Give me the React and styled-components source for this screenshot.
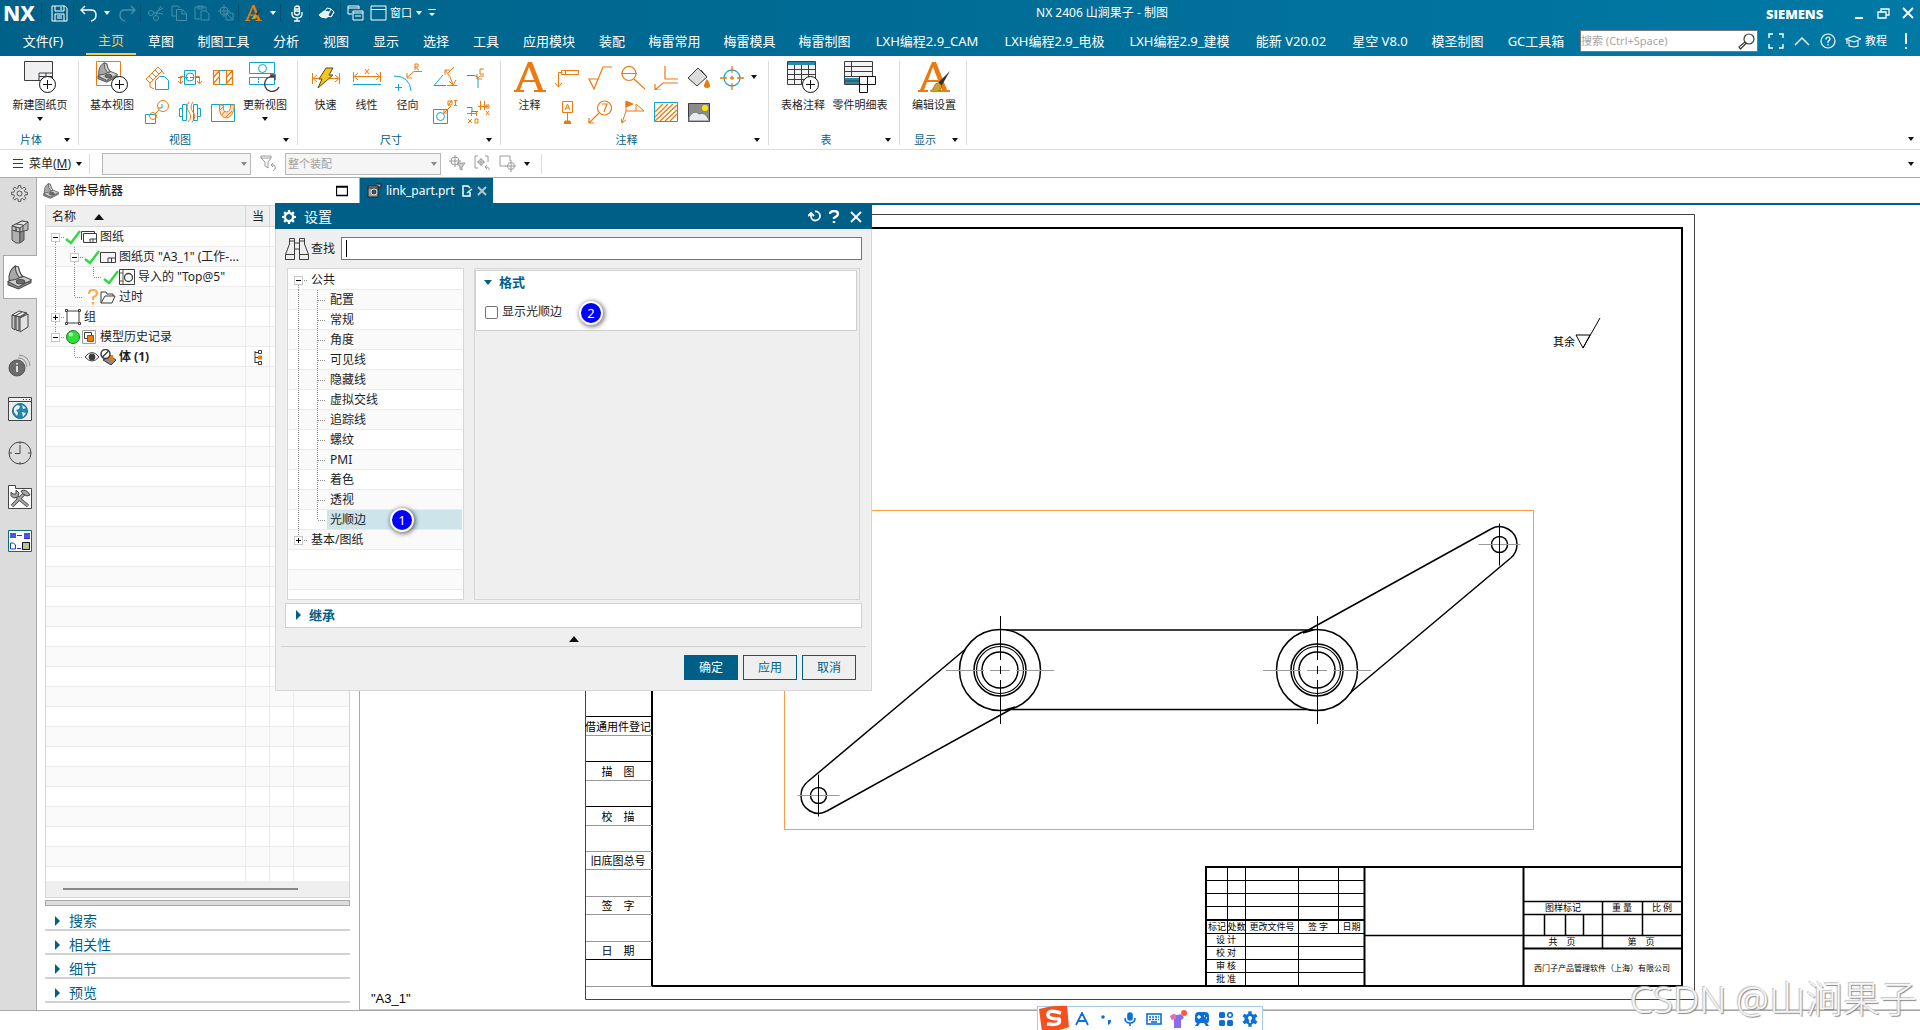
import React from "react";
import styled, { createGlobalStyle, css } from "styled-components";

const TEAL = "#005f87";
const OR = "#eb7a0f";
const CY = "#12a5cc";
const DK = "#3c3c3c";
const UI = `"Noto Sans", "Noto Sans CJK SC", sans-serif`;

const Global = createGlobalStyle`
  *, *::before, *::after { box-sizing: border-box; }
  body { margin: 0; background: #fff; color: #1e1e1e; font: 12px/16px ${UI}; overflow: hidden; }
  button, input, select { font: inherit; color: inherit; border: 0; padding: 0; margin: 0; background: none; border-radius: 0; }
  svg { display: block; flex: none; }
  ul { list-style: none; margin: 0; padding: 0; }
`;

/* ---------- shell ---------- */
const Shell = styled.div`display: flex; flex-direction: column; height: 100vh;`;
const Header = styled.header`
  height: 56px; flex: none; color: #fff;
  background: linear-gradient(90deg, #006188, #0079a5);
`;
const TitleBar = styled.div`display: flex; align-items: center; height: 26px;`;
const Brand = styled.div`width: 41px; padding-left: 3px; font-size: 21px; line-height: 26px; font-weight: 800;`;
const Sep = styled.span`width: 1px; height: 18px; margin-right: 3px; background: #004f70;`;
const QButton = styled.button`
  display: flex; align-items: center; justify-content: center;
  width: ${(p) => p.$w || 23}px; height: 26px; opacity: ${(p) => (p.$off ? 0.28 : 1)};
`;
const WindowText = styled.span`font-size: 11px;`;
const Title = styled.h1`flex: 1; margin: 0; text-align: center; font-size: 12px; line-height: 26px; font-weight: 400;`;
const Siemens = styled.span`width: 81px; font-family: "Open Sans", sans-serif; font-size: 13px; font-weight: 800; padding-top: 2px;`;
const MenuRow = styled.nav`display: flex; align-items: center; height: 30px;`;
const MenuTab = styled.button`
  height: 28px; font-size: 13px; line-height: 28px; white-space: nowrap; text-align: center;
  width: ${(p) => p.$w}px;
  ${(p) => p.$on && css`color: #ffc84a; border-bottom: 2px solid #ffc84a; line-height: 26px;`}
`;
const Find = styled.div`
  display: flex; align-items: center; flex: none; width: 178px; height: 22px; margin-left: 3px; margin-right: auto;
  padding-right: 2px; background: #fff; border: 1px solid #7a7a7a;
  input { flex: 1; min-width: 0; font-size: 11px; outline: 0; color: #222; }
  input::placeholder { color: #a6a6a6; opacity: 1; }
`;
const MenuEnd = styled.div`display: flex; align-items: center;`;
const HeadButton = styled.button`display: flex; align-items: center; justify-content: center; gap: 4px; width: ${(p) => p.$w || 26}px; height: 26px; font-size: 11px;`;

/* ---------- ribbon ---------- */
const Ribbon = styled.div`display: flex; flex: none; height: 94px; padding-top: 5px; border-bottom: 1px solid #dcdcdc;`;
const Group = styled.section`display: flex; flex-direction: column; flex: none; width: ${(p) => p.$w}px; height: 84px; border-right: 1px solid #dcdcdc;`;
const GroupBody = styled.div`display: flex; flex: none; height: 70px; padding-left: ${(p) => p.$pad}px;`;
const GroupFoot = styled.div`
  display: flex; align-items: center; flex: none; height: 14px; margin-top: 2px; padding-right: 6px; color: ${TEAL}; font-size: 11px; line-height: 14px;
  span { flex: 1; text-align: center; }
  button { width: 10px; height: 14px; display: flex; align-items: center; justify-content: center; }
`;
const Big = styled.button`
  display: flex; flex-direction: column; align-items: center; width: ${(p) => p.$w}px; height: 66px;
  font-size: 11px; line-height: 14px; white-space: nowrap; color: #1e1e1e;
  svg:first-child { margin-bottom: 5px; }
  svg:last-child:not(:first-child) { margin-top: 5px; }
`;
const SmallGrid = styled.div`display: grid; grid-template-columns: repeat(${(p) => p.$n}, 33px); grid-auto-rows: 34px;`;
const Small = styled.button`display: flex; align-items: center; justify-content: center;`;
const RibbonEnd = styled.button`display: flex; align-self: flex-end; margin: 0 6px 8px auto;`;

/* ---------- selection bar ---------- */
const SelBar = styled.div`display: flex; align-items: center; flex: none; height: 28px; border-bottom: 1px solid #a8a8a8; padding: 0 6px 0 12px;`;
const MenuButton = styled.button`display: flex; align-items: center; gap: 5px; width: 77px; font-size: 12px;`;
const BarSep = styled.span`width: 1px; height: 20px; background: #dcdcdc; margin-right: ${(p) => p.$r || 0}px; margin-left: ${(p) => p.$l || 0}px;`;
const Pick = styled.div`
  display: grid; align-items: center; width: ${(p) => p.$w}px; height: 22px;
  > * { grid-area: 1 / 1; }
  select { appearance: none; width: 100%; height: 22px; padding-left: 2px; background: #f5f5f5; border: 1px solid #b8b8b8; color: #a0a0a0; opacity: 1; font-size: 11px; }
  svg { justify-self: end; margin-right: 4px; }
`;
const BarIcon = styled.button`display: flex; align-items: center; justify-content: center; width: ${(p) => p.$w || 25}px; height: ${(p) => p.$h || 24}px;`;
const Push = styled.span`flex: 1;`;

/* ---------- main area ---------- */
const Main = styled.main`position: relative; display: flex; flex: 1; min-height: 0;`;
const Strip = styled.nav`width: 37px; flex: none; background: #dcdcdc; border-right: 1px solid #a8a8a8;`;
const StripButton = styled.button`
  display: flex; align-items: center; justify-content: center; width: 36px; height: ${(p) => p.$h || 44}px; padding-left: 3px;
  ${(p) => p.$on && css`width: 34px; margin-left: 3px; padding-left: 0; padding-right: 2px; background: #fff; border: 1px solid #a8a8a8; border-right: 0;`}
`;
const Side = styled.aside`display: flex; flex-direction: column; width: 323px; flex: none; border-right: 1px solid #a8a8a8; padding: 0 9px 7px 8px;`;
const SideTitle = styled.div`
  display: flex; align-items: center; height: 27px; gap: 4px; padding: 0 2px 2px 0; margin-left: -2px;
  h2 { flex: 1; margin: 0; font-size: 12px; font-weight: 500; }
`;
const Tree = styled.div`display: flex; flex-direction: column; flex: 1; min-height: 0; border: 1px solid #d6d6d6;`;
const TreeClip = styled.div`flex: 1; min-height: 0; overflow: hidden;`;
const TreeTable = styled.table`
  width: 100%; border-collapse: separate; border-spacing: 0; table-layout: fixed;
  col:nth-child(1) { width: 200px; }
  col:nth-child(2), col:nth-child(3) { width: 24px; }
  th { height: 21px; padding: 2px 0 0 6px; background: #efefef; border-bottom: 1px solid #d6d6d6; border-right: 1px solid #d6d6d6; text-align: left; font-weight: 400; line-height: 16px; }
  td { height: 20px; padding: 0; border-bottom: 1px solid #ebebeb; border-right: 1px solid #ebebeb; line-height: 16px; }
  tbody tr:nth-child(even) td { background: #fafafa; }
  th:last-child, td:last-child { border-right: 0; }
`;
const HeadCell = styled.div`display: flex; align-items: center; gap: 18px;`;
const NodeCell = styled.div`
  display: flex; align-items: center; height: 19px; white-space: nowrap; overflow: hidden; font-weight: ${(p) => (p.$b ? 700 : 400)};
  span { padding-left: 3px; }
`;
const ScrollTrack = styled.div`height: 16px; background: #efefef; padding: 7px 0 0 17px;`;
const ScrollThumb = styled.div`width: 82%; height: 2px; background: #888;`;
const Splitter = styled.div`height: 6px; margin: 2px 0 1px; background: #dcdcdc; border: 1px solid #a8a8a8;`;
const Fold = styled.button`
  display: flex; align-items: center; gap: 8px; width: 100%; height: 24px; padding: 5px 0 0 10px;
  border-bottom: 2px solid #d2d2d2; color: ${TEAL}; font-size: 14px; line-height: 17px; flex: none;
`;
const Work = styled.section`display: flex; flex-direction: column; flex: 1; min-width: 0; border-bottom: 1px solid #c8c8c8;`;
const DocTabs = styled.div`display: flex; height: 27px; flex: none; border-bottom: 2px solid ${TEAL};`;
const DocTab = styled.button`display: flex; align-items: center; width: 133px; height: 25px; padding-left: 7px; gap: 4px; background: ${TEAL}; color: #fff; font-size: 12px;
  span { flex: none; width: 72px; text-align: left; }
`;
const Canvas = styled.svg`flex: 1; min-height: 0; width: 100%;`;

/* ---------- dialog ---------- */
const Dialog = styled.div`position: absolute; left: 275px; top: 25px; width: 597px; background: #efefef; border: 1px solid #d6d6d6; border-top: 0;`;
const DialogHead = styled.div`
  display: flex; align-items: center; height: 26px; margin: 0 -1px; padding: 1px 4px 0 7px; background: ${TEAL}; color: #fff; gap: 8px;
  h2 { flex: 1; margin: 0; font-size: 14px; line-height: 24px; font-weight: 400; }
`;
const HeadTools = styled.div`display: flex; button { width: 20px; height: 24px; display: flex; align-items: center; justify-content: center; } button:last-child { width: 24px; }`;
const SearchRow = styled.label`display: flex; align-items: center; padding: 8px 9px 8px 9px; gap: 2px; line-height: 16px;`;
const SearchBox = styled.span`
  display: flex; align-items: center; flex: 1; height: 23px; margin-left: 4px; padding-left: 4px; border: 1px solid #757575; background: #fff;
  i { width: 1px; height: 17px; background: #000; }
  input { flex: 1; outline: 0; }
`;
const Panes = styled.div`display: flex; gap: 10px; height: 332px; padding: 0 11px;`;
const Cats = styled.ul`width: 177px; flex: none; padding: 1px; overflow: hidden; background: #fff; border: 1px solid #d6d6d6;`;
const Cat = styled.li`
  display: flex; height: 20px; border-bottom: 1px solid #ebebeb; background: ${(p) => (p.$alt ? "#fafafa" : "#fff")};
  svg { height: 20px; }
  span { flex: 1; padding-left: 3px; line-height: 19px; background: ${(p) => (p.$on ? "#cce4ea" : "none")}; }
`;
const Detail = styled.div`flex: 1; border: 1px solid #d6d6d6; padding: 1px 2px 0 0;`;
const Card = styled.fieldset`margin: 0; height: 61px; padding: 2px 8px; min-width: 0; background: #fff; border: 1px solid #d0d0d0;`;
const CardTitle = styled.button`display: flex; align-items: center; gap: 7px; height: 18px; color: ${TEAL}; font-size: 13px; font-weight: 700;`;
const Tick = styled.label`
  display: flex; align-items: center; gap: 4px; margin-top: 13px; padding-left: 1px;
  input { appearance: none; width: 13px; height: 13px; border: 1px solid #767676; border-radius: 2px; background: #fff; }
`;
const Inherit = styled.button`
  display: flex; align-items: center; gap: 7px; width: 577px; height: 25px; margin: 3px 9px 0; padding: 0 0 1px 10px;
  background: #fff; border: 1px solid #d0d0d0; color: ${TEAL}; font-size: 13px; font-weight: 700;
`;
const Collapse = styled.button`display: flex; justify-content: center; align-items: center; width: 585px; height: 19px; margin: 0 5px; padding-top: 3px; border-bottom: 1px solid #d0d0d0;`;
const Actions = styled.div`display: flex; justify-content: flex-end; gap: 5px; padding: 8px 15px 10px;`;
const Action = styled.button`
  width: 54px; height: 25px; border: 1px solid ${TEAL}; line-height: 20px;
  background: ${(p) => (p.$main ? TEAL : "transparent")}; color: ${(p) => (p.$main ? "#fff" : TEAL)};
`;
const Badge = styled.span`
  position: absolute; left: ${(p) => p.$x}px; top: ${(p) => p.$y}px; width: 24px; height: 24px; border-radius: 50%;
  background: #0000ff; border: 2px solid #fff; box-shadow: 1px 1px 4px 1px rgba(0,0,0,.5); color: #fff; text-align: center; font-size: 13px; line-height: 20px;
`;

/* ---------- bottom ---------- */
const Status = styled.footer`position: relative; flex: none; height: 20px; border-top: 1px solid #a8a8a8; background: #fff;`;
const Ime = styled.div`
  position: absolute; left: 54%; bottom: 0; display: flex; align-items: center; width: 226px; height: 24px;
  background: #fff; border: 1px solid #a9c9e8; border-bottom: 0; color: #0a6fd8;
  button { flex: none; width: 24px; height: 22px; display: flex; align-items: center; justify-content: center; }
  button:first-child { width: 32px; }
`;
const Mark = styled.div`
  position: absolute; right: 3px; bottom: 7px; font: 300 37px/48px ${UI}; color: rgba(255,255,255,.9);
  text-shadow: 1px 1px 1px #8a8a8a, -1px -1px 1px #c0c0c0; white-space: nowrap;
`;

/* ---------- drawing helpers ---------- */
const Ico = ({ w = 24, h = w, c = "currentColor", s = 1, children, vb }) => (
  <svg width={w} height={h} viewBox={vb || `0 0 ${w} ${h}`} fill="none" stroke={c} strokeWidth={s} aria-hidden="true">{children}</svg>
);
const Caret = ({ c = "#111" }) => <Ico w={6} h={4} c="none"><path d="M0 0h6L3 4z" fill={c} /></Ico>;
const RightTri = () => <Ico w={6} h={10} c="none"><path d="M0 0l5 5-5 5z" fill={TEAL} /></Ico>;
const UpTri = () => <Ico w={10} h={6} c="none"><path d="M0 6h10L5 0z" fill="#111" /></Ico>;

const cog = (c, inner, outer, n = 8) => {
  const step = (Math.PI * 2) / n;
  const at = (r, a) => `${(c + r * Math.cos(a)).toFixed(2)} ${(c + r * Math.sin(a)).toFixed(2)}`;
  let d = "";
  for (let i = 0; i < n; i++) {
    const a = i * step;
    d += `${i ? "L" : "M"}${at(inner, a - step * 0.3)}L${at(outer, a - step * 0.2)}L${at(outer, a + step * 0.2)}L${at(inner, a + step * 0.3)}`;
  }
  return d + "z";
};

const Branch = ({ k }) => {
  const up = /[uv]/.test(k), down = /[dv]/.test(k), box = /[-+]/.test(k);
  return (
    <Ico w={19} h={20} c="#8c8c8c">
      <g strokeDasharray="1 1">
        {up && <path d={`M9.5 0v${box ? 5 : 10}`} />}
        {down && <path d={`M9.5 ${box ? 15 : 10}v${box ? 5 : 10}`} />}
        {k.includes("h") && <path d={box ? "M15 10.5h3" : "M10 10.5h8"} />}
      </g>
      {box && <rect x="5.5" y="6.5" width="8" height="8" fill="#fff" stroke="#c8c8c8" />}
      {box && <path d="M7 10.5h5" stroke="#000" />}
      {k.includes("+") && <path d="M9.5 8v5" stroke="#000" />}
    </Ico>
  );
};

const Part = ({ w = 24, x = 0, y = 0 }) => (
  <svg x={x} y={y} width={w} height={w} viewBox="0 0 24 24" fill="#bdbdbd" stroke="#4a4a4a" strokeWidth="1">
    <path d="M1 16v3l10 4 12-6v-3z" fill="#8e8e8e" />
    <path d="M1 16l6-4 9-1 7 3q0 2-5 3l-7 4z" fill="#cfcfcf" />
    <path d="M2 15Q1 5 8 1l3 1q1 6 4 9l-7 3z" fill="#a8a8a8" />
    <path d="M8 1l3 1q1 6 4 9l-3 1Q8 8 8 1z" fill="#d8d8d8" />
    <ellipse cx="13" cy="16" rx="4" ry="2" fill="#6d6d6d" />
  </svg>
);
const Brush = ({ x = 0, y = 0, s = 1 }) => (
  <g transform={`translate(${x} ${y}) scale(${s})`} stroke="none">
    <path d="M20 0L9 11l3 3z" fill="#333" />
    <path d="M9 11c-5 1-3 6-8 8 6 2 11 0 11-5z" fill="#c9a227" stroke="#5b4a12" strokeWidth=".5" />
  </g>
);
const BigA = ({ w = 32, children }) => (
  <Ico w={w} h={32} vb="0 0 32 32" c="none">
    <path fill={OR} d="M0 29h2L14 1h4l11 28h3v2H20v-2h4l-3-8H9l-3 8h4v2H0zM10 19h10L15 6z" fillRule="evenodd" />
    {children}
  </Ico>
);
const PlusDisc = () => (
  <g stroke="#111"><circle cx="23.5" cy="23.5" r="8" fill="#fff" /><path d="M19 23.5h9M23.5 19v9" /></g>
);

const I = {
  save: <Ico w={17}><path d="M1 1h13l2 2v13H1zM4 1v5h9V1M10 2v3M4 16V9h9v7M6 11h5M6 13h5" /></Ico>,
  undo: <Ico w={17} s={1.4}><path d="M5 1L1 5l4 4M1 5h10q5 0 5 5t-5 6" /></Ico>,
  redo: <Ico w={17} s={1.4}><path d="M12 1l4 4-4 4M16 5H6q-5 0-5 5t5 6" /></Ico>,
  cut: <Ico w={16}><circle cx="3" cy="8" r="2.5" /><circle cx="8" cy="13" r="2.5" /><path d="M5 9l10-6M7 11L13 1M8 8l7 1" /></Ico>,
  copy: <Ico w={16}><path d="M5 11H1V1h6l2 2M5.500 4.500h6l4 4v7h-10zM11 5v4h4" /></Ico>,
  paste: <Ico w={16}><path d="M6 14H1V2h11v4M4 1h5v3H4zM7 6h5l3 3v6H7z" /></Ico>,
  sel: <Ico w={16}><circle cx="6" cy="6" r="4" /><path d="M6 0v12M0 6h12M8 8h7v7H8zM9 9l5 5" /></Ico>,
  abrush: <BigA w={17}><Brush x={10} y={6} s={1.1} /></BigA>,
  mic: <Ico w={12} h={17} s={1.3}><rect x="3.5" y="1" width="5" height="9" rx="2.5" /><path d="M1 7v2q0 4 5 4t5-4V7M6 13v3M3 16h6M4 4h4M4 6h4" /></Ico>,
  hand: <Ico w={17}><path d="M1 10l5-4 5 1-1 2-2 1 3 1-3 2-5-1z" fill="#e6f1f5" /><path d="M9 3l4 1 3 3-3 5-3-1M9 3l-2 3M13 4l-3 6M16 7l-3 5" /></Ico>,
  wins: <Ico w={17}><path d="M5 9H1V1h11v3M1 3h11M6 6h10v9H6zM6 8h10M8 11h6" /></Ico>,
  win: <Ico w={17}><path d="M1 1h15v14H1zM1 4.500h15" /></Ico>,
  cust: <Ico w={8} h={8} c="none"><path d="M0 0h8v1H0zM1 4h6L4 7z" fill="#fff" /></Ico>,
};

const R = {
  sheet: <Ico w={32} c={DK}><path d="M.5.5h28v19H.5z" fill="#f0f0f2" /><path d="M15 12h13M15 12v7M15 15.5h13M22 12v7" /><PlusDisc /></Ico>,
  base: <Ico w={32} c={OR}><path d="M.5.5h24v24H.5z" /><Part w={21} x={1} y={1} /><PlusDisc /></Ico>,
  update: <Ico w={32} c={CY}><path d="M.5 1.500h25v11H.5zM.5 16.500h25v7H.5z" /><circle cx="13.500" cy="7.500" r="4" /><path d="M9.500 17v7" strokeDasharray="2 1" /><path d="M15 24h15v7H15z" fill="#fff" stroke="none" /><path d="M26 16a7.500 7.500 0 1 0 4 10M21 14h5v5" stroke={DK} strokeWidth="1.3" /></Ico>,
  proj: <Ico c={OR}><path d="M1 13L13 1l4 4L5 17zM4 10l4 4M7 7l4 4M10 4l4 4M5 17v4l4 2M17 5l2 3" /><path d="M10.500 23.500v-9l4-4h5l4 4v9z" stroke={CY} fill="#fff" /></Ico>,
  section: <Ico c={CY}><path d="M6.500 4.500h11v14h-11z" /><circle cx="12" cy="11" r="4" /><path d="M0 11.500h24" strokeDasharray="4 2" /><path d="M6 10.500H2.500V17M0 15l2.500 3L5 15M18 10.500h3.500V17M19 15l2.500 3 2.500-3" stroke={OR} /></Ico>,
  fullsec: <Ico c={OR}><path d="M2.500 4.500h6v14h-6zM15.500 4.500h6v14h-6zM2 12l6-7M2 18l6-7M15 12l6-7M15 18l6-7" strokeWidth="1.2" /><path d="M9 4.500h6M9 18.500h6" stroke={CY} /></Ico>,
  detail: <Ico c={CY}><path d="M.5 14.500h10v9H.5zM13 8h4v-4" /><g stroke={OR}><circle cx="18" cy="6" r="5.500" /><circle cx="8" cy="16" r="3.500" /><path d="M10.500 13.500l3.500-3.500" /></g></Ico>,
  broken: <Ico c={CY}><path d="M1.500 8.500v8h3v-8zM4.500 4.500v16h4v-16zM22.500 8.500v8h-3v-8zM19.500 4.500v16h-4v-16z" /><path d="M11 2q-4 5 0 10t-1 10M15 2q-4 5 0 10t-1 10" stroke={OR} /></Ico>,
  breakout: <Ico c={CY}><path d="M.5 4.500h23v17H.5z" /><path d="M8.500 5q-1 12 7 13 7-1 8-13h-4q0 7-4 7t-3-7z" fill="#fbe3cd" stroke={OR} /><path d="M9 10l3-3M11 15l3-4M15 17l6-6" stroke={OR} /></Ico>,
  rapid: <Ico w={28} h={32} c={OR}><path d="M.5 12v11M27.500 12v11M2 17.500h24M5 14l-4 3.500L5 21M23 14l4 3.500-4 3.500" /><path d="M14 7h7l-4 7h4L6 27l4-9H7z" fill="#f8c51c" stroke="#5b4a12" /></Ico>,
  linear: <Ico w={28} h={32} c={OR}><path d="M.5 11v10M27.500 11v10M2 15.500h24M5 12l-4 3.500L5 19M23 12l4 3.500-4 3.500M12 8l4 5M16 8l-4 5" /><path d="M0 23.500h28" stroke={CY} /></Ico>,
  radial: <Ico w={28} h={32} c={CY}><path d="M0 15q16 0 17 15M1 26.500h7M4.500 23v7" /><path d="M28 10.500h-8l-7 6M13 12v5h5M21 9V3h3v3h-3l4 3" stroke={OR} /></Ico>,
  angle: <Ico c={CY}><path d="M10 9L1 19.500h12" /><path d="M12 4q6 6 8 15M12 9V4h5M16 15l4 4 3-5M14 19.500h10M14 8l7-7" stroke={OR} /></Ico>,
  chamfer: <Ico c={CY}><path d="M1 9.500h7q4 0 4 4V22" /><path d="M18 10h-4l-3 3M11 8v5h5M18 3h-4v5h4" stroke={OR} /></Ico>,
  hole: <Ico c={CY}><path d="M.5 9.500h14v14H.5z" /><circle cx="7.500" cy="16.500" r="4" /><path d="M18 6l-7 7M11 9v4h4M15 6l4-6M15 1h4v4h-4zM22.500 0v5M21 .5h3M21 5.500h3" stroke={OR} /></Ico>,
  ord: <Ico c={OR}><path d="M1 13.500h10M5.500 11v5M10.500 11v5M2 19l4 4M6 19l-4 4M9 19h3v4H9zM12 6.500h10M14.500 1v9M18.500 1v9M20 5h3v3h-3zM20 11l3 4M23 11l-3 4" /><path d="M1 7.500h5v4h6" stroke={CY} /></Ico>,
  leader: <Ico c={OR}><path d="M3.500 21V6.500h4M0 17l3.500 4L7 17M6.500 4.500h17v4h-17zM10.500 4v5" /></Ico>,
  surf: <Ico c={OR} s={1.2}><path d="M1 13h9l-4 10zM6 23L15 1h9" /></Ico>,
  mag: <Ico c={OR} s={1.2}><circle cx="8" cy="7.500" r="7" /><path d="M0 7.500h16M13 13l11 10" /></Ico>,
  corner: <Ico c={OR} s={1.2}><path d="M11 0v13h13M24 17H9l-8 7M1 18v6h6" /></Ico>,
  bucket: <Ico c={DK}><path d="M1 12L11 2l9 9-10 9z" fill="#dcdcdc" /><path d="M14 4l6 7" /><path d="M20 13q6 9 0 9t0-9z" fill={OR} stroke="none" /></Ico>,
  target: <Ico c={CY} s={1.3}><circle cx="12" cy="12" r="8" /><path d="M12 0v7M12 17v7M0 12h7M17 12h7M10 12h4M12 10v4" stroke={OR} /></Ico>,
  datum: <Ico c={OR}><path d="M7.500 1.500h10v11h-10zM12.500 12v9M10 10l2.500-6L15 10M11 8h3" /><path d="M9 24l1-3h5l1 3z" fill={OR} /></Ico>,
  balloon: <Ico c={OR} s={1.2}><circle cx="16.500" cy="8" r="7" /><path d="M11 13L1 23M1 18v5h5M14 4h5l-3 8" /></Ico>,
  weld: <Ico c={OR}><path d="M5 2v9L1 23M0 18l1 5 4-3M5 11h18M15 11V4l8 7" /><path d="M5 1l7 3-7 3z" fill={OR} /></Ico>,
  hatch: <Ico c={OR}><path d="M1 12l8-8M1 17L14 4M1 21L19 4M6 21L23 5M11 21l12-11M16 21l7-7" strokeWidth="1.3" /><path d="M.5 2.500h23v19H.5z" stroke={CY} /></Ico>,
  image: <Ico c={DK}><path d="M1.500 3.500h21v18h-21z" fill="#8b8b8b" /><path d="M2 17q5-8 10-3 6-3 10 6v1H2z" fill="#e7ecf2" stroke="#777" /><circle cx="18" cy="8" r="3" fill="#ffe500" stroke="none" /></Ico>,
  table: <Ico w={32} c={DK}><path d="M.5.5h28v23H.5z" fill="#f4f4f4" /><path d="M1 1h27v3H1z" fill="#2a88ad" stroke="none" /><path d="M0 8.500h28M0 13.500h28M0 18.500h28M7.500 4v20M14.500 4v20M21.500 4v20" /><PlusDisc /></Ico>,
  parts: <Ico w={32} c={DK}><path d="M.5.5h28v23H.5z" fill="#f4f4f4" /><path d="M1 17h16v6H1z" fill="#2a88ad" stroke="none" /><path d="M0 5.500h28M0 10.500h28M0 15.500h28M7.500 0v16M0 20h17" /><path d="M15.500 15.500h16v8h-8v8h-8zM15.500 23.500h8v-8" fill="#fff" stroke="#111" /></Ico>,
};

const S = {
  gear: <Ico w={17} c="#555"><circle cx="8.500" cy="8.500" r="2.500" /><path d={cog(8.5, 5.8, 8)} /></Ico>,
  asm: <Ico c="#4e4e4e"><path d="M4 10l8 2v11l-4 0-4-3z" fill="#b0b0b0" /><path d="M12 12l4-2v10l-4 3z" fill="#8a8a8a" /><path d="M4 10V6l4 1v4zM8 7l4 1v4l-4-1z" fill="#c6c6c6" /><path d="M4 6l10-5 6 1v8l-4 1-4 1V8L8 7z" fill="#b8b8b8" /><path d="M4 6l10-5 6 1-8 6z" fill="#e2e2e2" /><path d="M8 4l7 1v6" /></Ico>,
  part: <Part w={25} />,
  books: <Ico c="#444"><path d="M4 6l7-4 8 2-6 4z" fill="#f0f0f0" /><path d="M4 6l3 1v14l-3-2zM8 7l3 1v14l-3-1z" fill="#c4c4c4" /><path d="M12 9l8-4v13l-8 5z" fill="#e2e2e2" /><path d="M7 7l7-4M11 8l7-4" /></Ico>,
  info: <Ico c="#8c8c8c"><path d="M10 5q8 0 9 9M11 2q10 1 11 11" /><circle cx="9" cy="15" r="8" fill="#6b6b6b" stroke="#555" /><path d="M9 13v6M9 10v1.500" stroke="#fff" strokeWidth="1.500" /></Ico>,
  web: <Ico c="#444"><path d="M.5.5h23v23H.5zM0 4.500h24M15 2.500h1M18 2.500h1M21 2.500h1" fill="#eee" /><circle cx="12" cy="14" r="7.500" fill="#2487ab" stroke="#1a6f90" /><path d="M6 11l3-3 3 1-1 3-3 1 2 3-1 3-3-4zM14 8l4 3-3 1zM14 15l4 1-3 4z" fill="#e8f4f8" stroke="none" /></Ico>,
  clock: <Ico c="#444"><circle cx="12" cy="12" r="11" /><path d="M12 4v8.500H7M12 1v2M12 21v2M1 12h3M20 12h3" /></Ico>,
  tools: <Ico c="#444"><path d="M.5 23.500V.5h7v3h16v20z" fill="#fff" /><path d="M4 21L17 8M8 11l12 10" strokeWidth="3.500" stroke="#444" /><path d="M4 21L17 8M8 11l12 10" strokeWidth="1.800" stroke="#a8a8a8" /><path d="M3 7v4l3 2 4-1 1-4-3-3v4H5zM13 6q5-3 9 4l-3 1-4-2z" fill="#a8a8a8" /></Ico>,
  roles: <Ico h={22} c="#111"><path d="M.5.5h23v21H.5z" fill="#fff" stroke="#0b6e70" /><path d="M2 3h6v5H2zM16 3h6v5h-6z" fill="#4a55e0" stroke="none" /><path d="M9 5.500h5M9 18.500h4M16 8.500h6M2.500 13h3l2 2v4h-5z" stroke="#2434c4" /><path d="M14.500 12.500h7v7h-7z" fill="#b6c2a0" /></Ico>,
};

const T = {
  check: <Ico w={16} c="#2bdc3c" s={2.4}><path d="M1 10l5 4L15 2" /></Ico>,
  sheets: <Ico w={16} c={DK}><path d="M.5 11V2.500h13v2" /><path d="M2.500 4.500h13v9h-13zM9 13v-3h6M12 10v3" fill="#fff" /></Ico>,
  sheet: <Ico w={16} c={DK}><path d="M.5 3.500h15v10H.5zM8 13V9h7M11.500 9v4" fill="#f6f6f6" /></Ico>,
  view: <Ico w={16} c={DK}><path d="M.5.5h15v15H.5z" fill="#fff" /><path d="M4 1v14M1 4h3M1 12h3" stroke="#555" /><circle cx="9.500" cy="8.500" r="4" strokeWidth="1.300" /></Ico>,
  q: <Ico w={16} c="#ffab4a" s={2.2}><path d="M5 5q0-4 4-4t4 3.500q0 2-4 4V11M9 13v2.500" /></Ico>,
  folder: <Ico w={16} c={DK}><path d="M1 14V3h5l1 2h6v2M1 14l4-7h10l-3 7z" /></Ico>,
  group: <Ico w={16} c={DK}><path d="M2 2h12v12H2z" /><path d="M.5.5h2v2h-2zM13.500.5h2v2h-2zM.5 13.500h2v2h-2zM13.500 13.500h2v2h-2z" fill="#fff" /></Ico>,
  ball: <Ico w={16} c="#1c7a22"><circle cx="8" cy="8" r="6.500" fill="#2fe03b" /><circle cx="6" cy="5.500" r="2" fill="#b9ffbd" stroke="none" /></Ico>,
  hist: <Ico w={16} c="#777"><path d="M1.500 1.500h13v13h-13z" stroke="#a0a0a0" /><path d="M3.500 3.500h7v6h-7z" stroke={DK} fill="#fff" /><path d="M6.500 6.500h6v6h-6z" fill={OR} stroke="#a34f00" /></Ico>,
  eye: <Ico w={16} c={DK}><path d="M1 8q7-9 14 0-7 8-14 0z" fill="#fff" /><circle cx="8" cy="8" r="3" fill={DK} /></Ico>,
  body: <Ico w={16} c={DK}><path d="M3 11l7-4 6 4-5 5z" fill="#8a8a8a" /><path d="M7 6h6l1 6-5-1z" fill={OR} stroke="none" /><circle cx="5.500" cy="5" r="4.500" fill="#fff" strokeWidth="1.500" /><path d="M2.500 8l6-6" strokeWidth="1.500" /></Ico>,
};

/* ---------- data ---------- */
const menus = [["文件(F)", 86], ["主页", 50], ["草图", 50], ["制图工具", 75], ["分析", 50], ["视图", 50], ["显示", 50], ["选择", 50], ["工具", 50], ["应用模块", 76], ["装配", 50], ["梅雷常用", 75], ["梅雷模具", 75], ["梅雷制图", 75], ["LXH编程2.9_CAM", 130], ["LXH编程2.9_电极", 125], ["LXH编程2.9_建模", 125], ["能新 V20.02", 98], ["星空 V8.0", 80], ["模圣制图", 75], ["GC工具箱", 82]];

const nodes = [
  { b: ["-dh"], i: ["check", "sheets"], t: "图纸" },
  { b: ["v", "-vh"], i: ["check", "sheet"], t: '图纸页 "A3_1" (工作-...' },
  { b: ["v", "v", "uh"], i: ["check", "view"], t: '导入的 "Top@5"' },
  { b: ["v", "uh"], i: ["q", "folder"], t: "过时" },
  { b: ["+vh"], i: ["group"], t: "组" },
  { b: ["-uh"], i: ["ball", "hist"], t: "模型历史记录" },
  { b: ["", "uh"], i: ["eye", "body"], t: "体 (1)", bold: true },
];
const cats = ["配置", "常规", "角度", "可见线", "隐藏线", "虚拟交线", "追踪线", "螺纹", "PMI", "着色", "透视", "光顺边"];

const BigBtn = ({ w, icon, label, drop }) => <Big $w={w}>{icon}{label}{drop && <Caret />}</Big>;
const SmallSet = ({ n, items }) => (
  <SmallGrid $n={n}>{items.map((k) => <Small key={k} aria-label={k}>{R[k]}</Small>)}</SmallGrid>
);
const RibbonGroup = ({ w, pad, label, children }) => (
  <Group $w={w}>
    <GroupBody $pad={pad}>{children}</GroupBody>
    <GroupFoot><span>{label}</span><button aria-label={label + "选项"}><Caret /></button></GroupFoot>
  </Group>
);

const Top = () => (
  <Header>
    <TitleBar>
      <Brand>NX</Brand><Sep />
      <QButton $w={28} aria-label="保存">{I.save}</QButton><Sep />
      <QButton aria-label="撤销">{I.undo}</QButton>
      <QButton $w={14} aria-label="撤销列表"><Caret c="#fff" /></QButton>
      <QButton $w={26} $off aria-label="重做">{I.redo}</QButton><Sep />
      <QButton $off aria-label="剪切">{I.cut}</QButton>
      <QButton $off aria-label="复制">{I.copy}</QButton>
      <QButton $off aria-label="粘贴">{I.paste}</QButton>
      <QButton $w={25} $off aria-label="选择">{I.sel}</QButton><Sep />
      <QButton aria-label="编辑设置">{I.abrush}</QButton>
      <QButton $w={15} aria-label="设置列表"><Caret c="#fff" /></QButton><Sep />
      <QButton $w={25} aria-label="语音">{I.mic}</QButton><Sep />
      <QButton $w={27} aria-label="触摸">{I.hand}</QButton><Sep />
      <QButton aria-label="层叠">{I.wins}</QButton>
      <QButton aria-label="窗口">{I.win}</QButton>
      <WindowText>窗口</WindowText>
      <QButton $w={14} aria-label="窗口列表"><Caret c="#fff" /></QButton>
      <QButton $w={12} aria-label="自定义">{I.cust}</QButton>
      <Title>NX 2406 山涧果子 - 制图</Title>
      <Siemens>SIEMENS</Siemens>
      <QButton $w={24} aria-label="最小化"><Ico w={12} s={2}><path d="M2 11h8" /></Ico></QButton>
      <QButton $w={24} aria-label="还原"><Ico w={13} s={1.3}><path d="M4 5V2h8v6H9M1 5h8v6H1z" /></Ico></QButton>
      <QButton $w={25} aria-label="关闭"><Ico w={12} s={1.8}><path d="M1 1l10 10M11 1L1 11" /></Ico></QButton>
    </TitleBar>
    <MenuRow>
      {menus.map(([t, w], i) => <MenuTab key={t} $w={w} $on={i === 1}>{t}</MenuTab>)}
      <Find>
        <input aria-label="搜索" placeholder="搜索 (Ctrl+Space)" />
        <Ico w={17} c={DK} s={1.2}><circle cx="11" cy="6" r="5" /><path d="M7 9l-6 5 1.500 2L8.500 10" /></Ico>
      </Find>
      <MenuEnd>
        <HeadButton aria-label="全屏"><Ico w={16} s={1.4}><path d="M1 5V1h4M11 1h4v4M15 11v4h-4M5 15H1v-4" /></Ico></HeadButton>
        <HeadButton aria-label="收起"><Ico w={16} s={1.4}><path d="M1 12l7-7 7 7" /></Ico></HeadButton>
        <HeadButton aria-label="帮助"><Ico w={16} s={1.2}><circle cx="8" cy="8" r="7" /><path d="M6 6.500q0-2.500 2-2.500t2 2q0 1-2 2.500V10M8 11v1.500" /></Ico></HeadButton>
        <HeadButton $w={50}><Ico w={16} s={1.1}><path d="M1 6l8-3 7 3-7 3zM4 7.500V13l5 1 4-1V8M2 7v4" /></Ico>教程</HeadButton>
        <HeadButton $w={29} aria-label="提示"><Ico w={4} h={17} s={2}><path d="M2 0v11M2 14v2" /></Ico></HeadButton>
      </MenuEnd>
    </MenuRow>
  </Header>
);

const RibbonBar = () => (
  <Ribbon>
    <RibbonGroup w={79} pad={7} label="片体"><BigBtn w={66} icon={R.sheet} label="新建图纸页" drop /></RibbonGroup>
    <RibbonGroup w={219} pad={5} label="视图">
      <BigBtn w={56} icon={R.base} label="基本视图" />
      <SmallSet n={3} items={["proj", "section", "fullsec", "detail", "broken", "breakout"]} />
      <BigBtn w={52} icon={R.update} label="更新视图" drop />
    </RibbonGroup>
    <RibbonGroup w={203} pad={7} label="尺寸">
      <BigBtn w={41} icon={R.rapid} label="快速" />
      <BigBtn w={41} icon={R.linear} label="线性" />
      <BigBtn w={41} icon={R.radial} label="径向" />
      <SmallSet n={2} items={["angle", "chamfer", "hole", "ord"]} />
    </RibbonGroup>
    <RibbonGroup w={268} pad={8} label="注释">
      <BigBtn w={41} icon={<BigA />} label="注释" />
      <SmallSet n={6} items={["leader", "surf", "mag", "corner", "bucket", "target", "datum", "balloon", "weld", "hatch", "image"]} />
      <BarIcon $w={12} $h={32} aria-label="更多"><Caret /></BarIcon>
    </RibbonGroup>
    <RibbonGroup w={131} pad={6} label="表">
      <BigBtn w={56} icon={R.table} label="表格注释" />
      <BigBtn w={58} icon={R.parts} label="零件明细表" />
    </RibbonGroup>
    <RibbonGroup w={67} pad={6} label="显示">
      <BigBtn w={56} icon={<BigA><Brush x={11} y={10} s={1.05} /></BigA>} label="编辑设置" />
    </RibbonGroup>
    <RibbonEnd aria-label="功能区选项"><Caret /></RibbonEnd>
  </Ribbon>
);

const SelectionBar = () => (
  <SelBar>
    <MenuButton><Ico w={12} h={12} c={DK}><path d="M1 1.500h10M1 5.500h10M1 9.500h10" /></Ico><span>菜单(<u>M</u>)</span><Caret /></MenuButton>
    <BarSep $r={12} />
    <Pick $w={149}><select aria-label="类型过滤器" disabled><option></option></select><Caret c="#8a8a8a" /></Pick>
    <BarIcon $w={34} aria-label="重置过滤器"><Ico w={17} c="#9a9a9a"><path d="M1 1h10v2L8 7v6l-3-2V7L1 3zM1 3h10M11 10h3q3 3-1 6M13 8l-2 2 2 2" /></Ico></BarIcon>
    <Pick $w={156}><select aria-label="选择范围" disabled><option>整个装配</option></select><Caret c="#8a8a8a" /></Pick>
    <BarIcon $w={33} aria-label="捕捉"><Ico w={17} c="#9a9a9a"><circle cx="6" cy="6" r="4" /><path d="M6 0v12M0 6h12" /><path d="M8 8h8l-3 4v3l-2-1v-2z" fill="#ccc" /></Ico></BarIcon>
    <BarIcon $w={17} aria-label="范围"><Ico w={17} c="#9a9a9a"><path d="M4 1H1v12h3M11 1h3v6M7 3v8M3 7h8M15 15q1-3-4-3M13 10l-2 2 2 2" /><circle cx="7" cy="7" r="2.500" /></Ico></BarIcon>
    <BarIcon $w={32} aria-label="点"><Ico w={17} c="#9a9a9a"><path d="M7 11H1V1h10v5M12 5v12M6 11h11" /><circle cx="12" cy="11" r="3.500" /></Ico></BarIcon>
    <BarIcon $w={8} aria-label="点列表"><Caret /></BarIcon>
    <BarSep $l={10} />
    <Push />
    <button aria-label="工具条选项"><Caret /></button>
  </SelBar>
);

const Navigator = () => (
  <Side>
    <SideTitle><Part w={16} /><h2>部件导航器</h2><Ico w={12} h={12} c="#000" s={1.3}><path d="M.5 1.500h11v9H.5zM0 2h12" /></Ico></SideTitle>
    <Tree>
      <TreeClip>
        <TreeTable>
          <colgroup><col /><col /><col /><col /></colgroup>
          <thead><tr><th><HeadCell>名称<UpTri /></HeadCell></th><th>当</th><th /><th /></tr></thead>
          <tbody>
            {Array.from({ length: 33 }, (_, r) => {
              const n = nodes[r];
              return (
                <tr key={r}>
                  <td>{n && <NodeCell $b={n.bold}>{n.b.map((k, j) => <Branch key={j} k={k} />)}{n.i.map((k) => <React.Fragment key={k}>{T[k]}</React.Fragment>)}<span>{n.t}</span></NodeCell>}</td>
                  <td>{r === 6 && <Ico w={22} h={16} c={DK}><path d="M9 2v12M9 3.500h3M9 8.500h3M9 13.500h3M12.500 1.500h3v3h-3zM12.500 12.500h3v3h-3z" /><path d="M12 6.500h4v4h-4z" fill={OR} stroke="none" /></Ico>}</td>
                  <td /><td />
                </tr>
              );
            })}
          </tbody>
        </TreeTable>
      </TreeClip>
      <ScrollTrack><ScrollThumb /></ScrollTrack>
    </Tree>
    <Splitter />
    {["搜索", "相关性", "细节", "预览"].map((t) => <Fold key={t}><RightTri />{t}</Fold>)}
  </Side>
);

const Hub = ({ x }) => (
  <g>
    {[40.5, 26, 23.5, 18].map((r, i) => <circle key={r} cx={x} cy={670} r={r} fill={i ? "none" : "#fff"} strokeWidth={i === 2 ? 1.2 : 1.5} />)}
    <path d={`M${x - 54} 670.500h38m6 0h20m6 0h38`} stroke="#9a9a9a" strokeWidth="1" />
    <path d={`M${x}.5 616v44m0 6v8m0 6v44`} strokeWidth="1" />
  </g>
);
const Pin = ({ x, y }) => (
  <g><circle cx={x} cy={y} r="8" /><path d={`M${x - 21} ${y}h42`} stroke="#9a9a9a" strokeWidth="1" /><path d={`M${x} ${y - 21}v42`} strokeWidth="1" /></g>
);
const L = ({ x, y, children, s = 9 }) => (
  <text x={x} y={y} fontSize={s} textAnchor="middle" dominantBaseline="central" fill="#000" stroke="none">{children}</text>
);
const Drawing = () => (
  <Canvas viewBox="360 205 1560 804" preserveAspectRatio="xMinYMin meet" fill="none" stroke="#000" fontFamily={'"Noto Sans CJK SC", sans-serif'} role="img" aria-label="A3_1">
    <path d="M585.500 999.500V214.500H1694.500V999.500z" strokeWidth="1" stroke="#444" />
    <path d="M652 986V228H1682V986z" strokeWidth="2" />
    <path d="M586 716.500h66M586 761.500h66M586 806.500h66M586 959.500h66" />
    <path d="M586 735.500h66M586 780.500h66M586 825.500h66M586 851.500h66M586 869.500h66M586 896.500h66M586 914.500h66M586 941.500h66M586 986.500h66" stroke="#999" />
    <L x={618} y={726} s={11}>借通用件登记</L>
    <L x={618} y={771} s={11}>描　图</L>
    <L x={618} y={816} s={11}>校　描</L>
    <L x={618} y={860} s={11}>旧底图总号</L>
    <L x={618} y={905} s={11}>签　字</L>
    <L x={618} y={950} s={11}>日　期</L>

    <path d="M784.500 510.500H1533.500V829.500H784.500z" stroke="#f79d45" />
    <g strokeWidth="1.500">
      <path d="M1491 529L1303 633M1510.700 558L1350 693M968 647L807.300 782M1015 707L827 811M1000 630H1318M1000 709.500H1318" />
      <path d="M1491 529A17.500 17.500 0 0 1 1517 544.500A17.500 17.500 0 0 1 1510.700 558M807.300 782A17.500 17.500 0 0 0 801 795.500A17.500 17.500 0 0 0 827 811" />
      <Hub x={1000} /><Hub x={1317} />
      <path d="M1303 633l10-3M1015 707l-10 3" />
      <Pin x={1499.5} y={544.5} /><Pin x={818.5} y={795.5} />
    </g>

    <L x={1564} y={341} s={11}>其余</L>
    <path d="M1576 335h14l-7 13zM1583 348L1600 318" />

    <path d="M1206 986V867H1682M1364.500 867V986M1523.500 867V986M1206 920H1364M1523 948.500H1682" strokeWidth="2" />
    <path d="M1227.500 867V933M1245.500 867V986M1298.500 867V986M1338.500 867V933M1206 880.500H1364M1206 893.500H1364M1206 906.500H1364M1206 933.500H1364M1206 946.500H1364M1206 959.500H1364M1206 972.500H1364" />
    <path d="M1364 935.500H1682M1523 901.500H1682M1523 914.500H1682M1602.500 901V948M1642.500 901V935M1544.500 914V935M1565.500 914V935M1583.500 914V935" strokeWidth="1.500" />
    <L x={1217} y={926}>标记</L><L x={1236.5} y={926}>处数</L><L x={1272} y={926}>更改文件号</L><L x={1318} y={926}>签 字</L><L x={1351.5} y={926}>日期</L>
    <L x={1226} y={939}>设 计</L><L x={1226} y={952}>校 对</L><L x={1226} y={965}>审 核</L><L x={1226} y={978}>批 准</L>
    <L x={1563} y={907}>图样标记</L><L x={1622} y={907}>重 量</L><L x={1662} y={907}>比 例</L>
    <L x={1562} y={941}>共　页</L><L x={1641} y={941}>第　页</L>
    <L x={1602} y={967} s={8}>西门子产品管理软件（上海）有限公司</L>
    <text x="371" y="1003" fontSize="13" fontFamily={'"Liberation Sans", sans-serif'} fill="#000" stroke="none">"A3_1"</text>
  </Canvas>
);

const Settings = () => (
  <Dialog role="dialog" aria-label="设置">
    <DialogHead>
      <Ico w={14} c="none"><path fillRule="evenodd" fill="#fff" d={cog(7, 5.2, 7) + "M7 4a3 3 0 1 0 .01 0z"} /></Ico>
      <h2>设置</h2>
      <HeadTools>
        <button aria-label="重置"><Ico w={13} s={1.8}><path d="M3 4v2.500a4.500 4.500 0 1 0 4-5M0 6l3-3 3 3" /></Ico></button>
        <button aria-label="帮助"><Ico w={10} h={13} s={2.4}><path d="M1 4q0-3 4-3t4 3q0 2-4 4v1M5 11v2" /></Ico></button>
        <button aria-label="关闭"><Ico w={12} s={1.8}><path d="M1 1l10 10M11 1L1 11" /></Ico></button>
      </HeadTools>
    </DialogHead>
    <SearchRow>
      <Ico w={24} h={23} c={DK}><path d="M.5 22.500v-5L4.500 7V1.500h5v21zM23.500 22.500v-5L19.500 7V1.500h-5v21zM.5 17.500h9M14.500 17.500h9M9.500 6h5M9.500 12h5M4.500 4h5M14.500 4h5M.5 22.500h9M14.500 22.500h9" /></Ico>
      查找
      <SearchBox><i /><input aria-label="查找" /></SearchBox>
    </SearchRow>
    <Panes>
      <Cats>
        <Cat><Branch k="-dh" /><span>公共</span></Cat>
        {cats.map((t, i) => (
          <Cat key={t} $alt={i % 2 === 0} $on={i === 11}><Branch k="v" /><Branch k={i === 11 ? "uh" : "vh"} /><span>{t}</span></Cat>
        ))}
        <Cat $alt><Branch k="+uh" /><span>基本/图纸</span></Cat>
        <Cat /><Cat $alt /><Cat />
      </Cats>
      <Detail>
        <Card>
          <CardTitle><Ico w={8} h={5} c="none"><path d="M0 0h8L4 5z" fill={TEAL} /></Ico>格式</CardTitle>
          <Tick><input type="checkbox" />显示光顺边</Tick>
        </Card>
      </Detail>
    </Panes>
    <Inherit><RightTri />继承</Inherit>
    <Collapse aria-label="收起"><UpTri /></Collapse>
    <Actions><Action $main>确定</Action><Action>应用</Action><Action>取消</Action></Actions>
    <Badge $x={114} $y={305}>1</Badge>
    <Badge $x={303} $y={98}>2</Badge>
  </Dialog>
);

const ImeBar = () => (
  <Ime>
    <button aria-label="输入法"><Ico w={31} h={28} c="none"><path d="M1 4q14-4 28-3l2 21q-14 5-27 5z" fill="#f4511e" /><path d="M23 8q-12-4-13 1t11 5q3 7-12 5" stroke="#fff" strokeWidth="3.500" /></Ico></button>
    <button aria-label="英文"><Ico w={14} s={1.8}><path d="M1 13L7 1l6 12M3 9h8" /></Ico></button>
    <button aria-label="标点"><Ico w={14} c="none"><circle cx="4" cy="5" r="1.800" fill="#0a6fd8" /><path d="M9 8h3q0 4-3 5z" fill="#0a6fd8" /></Ico></button>
    <button aria-label="语音输入"><Ico w={14} s={1.6}><rect x="5" y="1" width="4" height="7" rx="2" fill="#0a6fd8" /><path d="M2 6q0 5 5 5t5-5M7 11v3" /></Ico></button>
    <button aria-label="软键盘"><Ico w={16} h={12} s={1.6}><rect x="1" y="1" width="14" height="10" /><path d="M3 4h10M3 6.500h10" strokeDasharray="2 1" /><path d="M5 9h6" /></Ico></button>
    <button aria-label="皮肤"><Ico w={18} h={20} c="none"><path d="M1 7l4-2q3 2 6 0l4 3-2 3-1-1v9H5v-9l-2 1z" fill="#8a6cf0" /><path d="M1 7l4-2 2 1v4l-2 0-2 1z" fill="#f06ab0" /><circle cx="15" cy="4" r="3" fill="#ff5a36" /></Ico></button>
    <button aria-label="游戏"><Ico w={16} c="none"><path d="M1 5q0-4 4-4h6q4 0 4 4v4q0 3-2 3l2 3h-3l-2-3H6l-2 3H1l2-3q-2 0-2-3z" fill="#0a6fd8" /><path d="M3 6h4M5 4v4M10 5h1M12 7h1" stroke="#fff" strokeWidth="1.400" /></Ico></button>
    <button aria-label="工具箱"><Ico w={14} c="none"><rect width="6" height="6" rx="1.500" fill="#0a6fd8" /><rect y="8" width="6" height="6" rx="1.500" fill="#0a6fd8" /><rect x="8" y="8" width="6" height="6" rx="1.500" fill="#0a6fd8" /><circle cx="11" cy="3" r="2.300" stroke="#0a6fd8" strokeWidth="1.600" /></Ico></button>
    <button aria-label="输入法设置"><Ico w={16} c="none"><g transform="rotate(30 8 8)"><path fill="#0a6fd8" d={cog(8, 5.6, 7.8, 6)} /></g><path d="M8 6v6" stroke="#fff" strokeWidth="1.600" /><circle cx="8" cy="7" r="2" fill="#fff" /></Ico></button>
  </Ime>
);

const stripItems = [["gear", 30], ["asm", 47], ["part", 44], ["books", 44], ["info", 44], ["web", 44], ["clock", 44], ["tools", 44], ["roles", 44]];

export default function App() {
  return (
    <Shell>
      <Global />
      <Top />
      <RibbonBar />
      <SelectionBar />
      <Main>
        <Strip>{stripItems.map(([k, h]) => <StripButton key={k} $h={h} $on={k === "part"} aria-label={k}>{S[k]}</StripButton>)}</Strip>
        <Navigator />
        <Work>
          <DocTabs>
            <DocTab>
              <Ico w={15} c="#222"><path d="M1 3h10v11H1zM9 1h5v3h-3M1 5h10" fill="#9aa0a4" /><circle cx="7" cy="9" r="3" fill="#3c4a52" stroke="#ddd" /></Ico>
              <span>link_part.prt</span>
              <Ico w={11} h={12} s={1.5}><path d="M5 11H1V1h5l2 2M8 7v4H5M5 8l5-4" /></Ico>
              <Ico w={10} c="#b9c4ca" s={2}><path d="M1 1l8 8M9 1L1 9" /></Ico>
            </DocTab>
          </DocTabs>
          <Drawing />
        </Work>
        <Settings />
      </Main>
      <Status>
        <ImeBar />
        <Mark>CSDN @山涧果子</Mark>
      </Status>
    </Shell>
  );
}
